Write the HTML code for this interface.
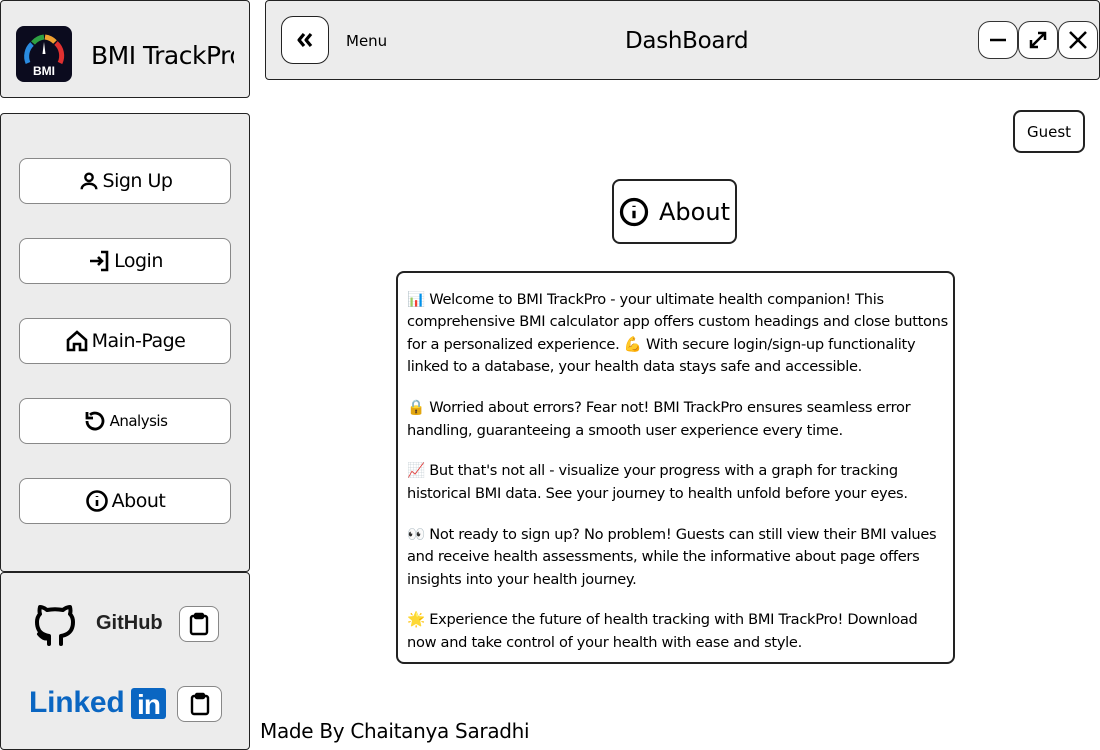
<!DOCTYPE html>
<html><head><meta charset="utf-8"><style>
*{box-sizing:border-box;margin:0;padding:0}
body{width:1100px;height:750px;background:#fff;font-family:"DejaVu Sans","Liberation Sans",sans-serif;position:relative;overflow:hidden;color:#000}
.box{position:absolute;background:#ececec;border:1px solid #222;border-radius:4px}
.btn{position:absolute;background:#fff;border:1px solid #888;border-radius:8px;display:flex;align-items:center;justify-content:center}
.sb{left:19px;width:212px;height:46px;font-size:19px;letter-spacing:-0.5px}
.sb svg{margin-right:3px}
.txt{position:absolute;left:396px;top:271px;width:559px;height:393px;border:2px solid #222;border-radius:8px;padding:16px 0 0 9px;font-size:14.6px;line-height:22.4px;letter-spacing:-0.3px;white-space:nowrap}
.txt p{margin-bottom:18.5px}
.cb{position:absolute;width:40px;height:38px;background:#fff;border:1.5px solid #333;border-radius:12px;display:flex;align-items:center;justify-content:center}
</style></head><body>
<div class="box" style="left:0;top:0;width:250px;height:98px"></div>
<div style="position:absolute;left:16px;top:26px;width:56px;height:56px;background:#0b0b1e;border-radius:8px">
<svg width="56" height="56" viewBox="0 0 56 56"><path d="M12 37 A17 17 0 0 1 16 18" stroke="#2a8be0" stroke-width="5" fill="none"/><path d="M17 17 A17 17 0 0 1 28 11" stroke="#2ea043" stroke-width="5" fill="none"/><path d="M29 11 A17 17 0 0 1 39 16" stroke="#f0a030" stroke-width="5" fill="none"/><path d="M40 17 A17 17 0 0 1 44 37" stroke="#e03030" stroke-width="5" fill="none"/><path d="M28 16 L29.5 28 L26.5 28Z" fill="#fff"/><text x="28" y="49" font-size="12" font-weight="bold" fill="#fff" text-anchor="middle" font-family="Liberation Sans">BMI</text></svg></div>
<div style="position:absolute;left:91px;top:41px;width:143px;overflow:hidden;white-space:nowrap;font-size:25px;letter-spacing:-0.5px">BMI TrackPro</div>
<div class="box" style="left:0;top:113px;width:250px;height:459px"></div>
<div class="box" style="left:0;top:572px;width:250px;height:178px"></div>
<div class="box" style="left:265px;top:0;width:835px;height:80px"></div>
<div class="btn" style="left:281px;top:16px;width:48px;height:48px;border-color:#222;border-radius:12px"><svg width="18" height="16" viewBox="0 0 18 16" fill="none" stroke="#000" stroke-width="3.2" stroke-linejoin="round"><path d="M8 2L3 8l5 6M15 2l-5 6 5 6"/></svg></div>
<div style="position:absolute;left:346px;top:32px;font-size:15px">Menu</div>
<div style="position:absolute;left:625px;top:28px;font-size:23px;letter-spacing:-0.3px">DashBoard</div>
<div class="cb" style="left:978px;top:21px"><svg width="22" height="22"><path d="M3 11H19" stroke="#000" stroke-width="2.5"/></svg></div>
<div class="cb" style="left:1018px;top:21px"><svg width="22" height="22"><path d="M4 18L18 4M11 4H18V11M4 11V18H11" stroke="#000" stroke-width="2.5" fill="none"/></svg></div>
<div class="cb" style="left:1058px;top:21px"><svg width="22" height="22"><path d="M3 3L19 19M19 3L3 19" stroke="#000" stroke-width="2.5"/></svg></div>

<div class="btn sb" style="top:158px"><svg width="22" height="22" viewBox="0 0 24 24" fill="none" stroke="#000" stroke-width="2.6"><circle cx="12" cy="8" r="4"/><path d="M4 21c0-4 4-6 8-6s8 2 8 6"/></svg>Sign Up</div>
<div class="btn sb" style="top:238px"><svg width="24" height="24" viewBox="0 0 24 24" fill="none" stroke="#000" stroke-width="2.6"><path d="M14 3h6v18h-6M3 12h12M11 8l4 4-4 4"/></svg>Login</div>
<div class="btn sb" style="top:318px"><svg width="24" height="24" viewBox="0 0 24 24" fill="none" stroke="#000" stroke-width="2.6"><path d="M3 11L12 3l9 8v10h-6v-6h-6v6H3z"/></svg>Main-Page</div>
<div class="btn sb" style="top:398px;font-size:15px"><svg width="24" height="24" viewBox="0 0 24 24" fill="none" stroke="#000" stroke-width="2.8"><path d="M4 12a8 8 0 1 0 3-6.2M4 3v6h6"/></svg>Analysis</div>
<div class="btn sb" style="top:478px"><svg width="24" height="24" viewBox="0 0 24 24" fill="none" stroke="#000" stroke-width="2.6"><circle cx="12" cy="12" r="9.5"/><path d="M12 11v6M12 7v1"/></svg>About</div>

<svg style="position:absolute;left:34px;top:600px" width="44" height="46" viewBox="0 0 44 46" fill="none" stroke="#000" stroke-width="4" stroke-linecap="round" stroke-linejoin="round"><path d="M15 44v-8c-6-1-12-4-12-14 0-3 1-6 3-8-1-3 0-7 0-7s4 0 7 3c5-1 11-1 16 0 3-3 7-3 7-3s1 4 0 7c2 2 3 5 3 8 0 10-6 13-12 14v8M15 38c-5 2-8-2-10-4"/></svg>
<div style="position:absolute;left:96px;top:612px;font-size:20px;font-weight:bold;font-family:'Liberation Sans',sans-serif;color:#222">GitHub</div>
<div class="btn" style="left:179px;top:606px;width:40px;height:36px"><svg width="20" height="24" viewBox="0 0 20 24" fill="none" stroke="#000" stroke-width="2.4"><rect x="2" y="4" width="16" height="18" rx="2"/><rect x="6" y="2" width="8" height="4" rx="1"/></svg></div>
<div style="position:absolute;left:29px;top:686px;font-size:30px;font-weight:bold;font-family:'Liberation Sans',sans-serif;color:#0a66c2;letter-spacing:-0.2px">Linked</div>
<div style="position:absolute;left:131px;top:688px;width:35px;height:31px;background:#0a66c2;border-radius:3px;color:#fff;font-size:28px;font-weight:bold;font-family:'Liberation Sans',sans-serif;line-height:33px;text-align:center;letter-spacing:-1px">in</div>
<div class="btn" style="left:177px;top:686px;width:45px;height:36px"><svg width="20" height="24" viewBox="0 0 20 24" fill="none" stroke="#000" stroke-width="2.4"><rect x="2" y="4" width="16" height="18" rx="2"/><rect x="6" y="2" width="8" height="4" rx="1"/></svg></div>

<div class="btn" style="left:1013px;top:110px;width:72px;height:43px;border:2px solid #222;font-size:15px">Guest</div>
<div class="btn" style="left:612px;top:179px;width:125px;height:65px;border:2px solid #222;font-size:24px"><svg width="30" height="30" viewBox="0 0 24 24" fill="none" stroke="#000" stroke-width="2.6" style="margin-right:10px"><circle cx="12" cy="12" r="10"/><path d="M12 11v6M12 7v1"/></svg>About</div>

<div class="txt">
<p>📊 Welcome to BMI TrackPro - your ultimate health companion! This<br>comprehensive BMI calculator app offers custom headings and close buttons<br>for a personalized experience. 💪 With secure login/sign-up functionality<br>linked to a database, your health data stays safe and accessible.</p>
<p>🔒 Worried about errors? Fear not! BMI TrackPro ensures seamless error<br>handling, guaranteeing a smooth user experience every time.</p>
<p>📈 But that's not all - visualize your progress with a graph for tracking<br>historical BMI data. See your journey to health unfold before your eyes.</p>
<p>👀 Not ready to sign up? No problem! Guests can still view their BMI values<br>and receive health assessments, while the informative about page offers<br>insights into your health journey.</p>
<p>🌟 Experience the future of health tracking with BMI TrackPro! Download<br>now and take control of your health with ease and style.</p>
</div>
<div style="position:absolute;left:260px;top:719px;font-size:20px;letter-spacing:-0.3px">Made By Chaitanya Saradhi</div>
</body></html>
